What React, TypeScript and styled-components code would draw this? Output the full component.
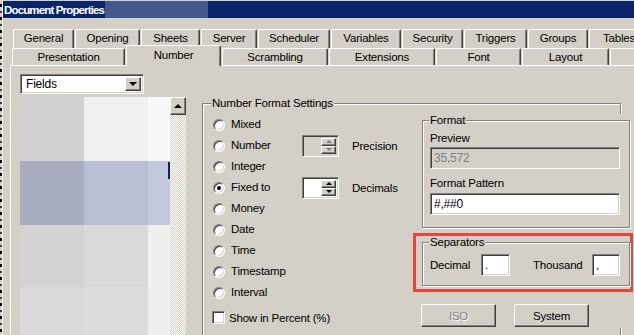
import styled, { createGlobalStyle } from 'styled-components';

const GlobalStyle = createGlobalStyle`
  html, body {
    margin: 0;
    padding: 0;
    background: #d4d0c8;
  }
  body {
    font-family: 'Liberation Sans', Arial, sans-serif;
    font-size: 11.5px;
    letter-spacing: -0.2px;
    color: #000;
  }
  * {
    box-sizing: border-box;
  }
`;

const TOP_TABS = [
    { label: 'General', w: 61 },
    { label: 'Opening', w: 65 },
    { label: 'Sheets', w: 59 },
    { label: 'Server', w: 56 },
    { label: 'Scheduler', w: 72 },
    { label: 'Variables', w: 70 },
    { label: 'Security', w: 61 },
    { label: 'Triggers', w: 63 },
    { label: 'Groups', w: 60 },
    { label: 'Tables', w: 60 },
];

const BOTTOM_TABS = [
    { label: 'Presentation', w: 113 },
    { label: 'Number', w: 95, active: true },
    { label: 'Scrambling', w: 106 },
    { label: 'Extensions', w: 106 },
    { label: 'Font', w: 85 },
    { label: 'Layout', w: 87 },
    { label: '', w: 70 },
];

const LIST_ROWS = [
    { h: 64, colors: ['#d1d1d1', '#f0f0f1', '#f8f8f8', '#f8f8f8'] },
    { h: 64, colors: ['#a8aebf', '#bac0d3', '#c3c8da', '#c3c8da'], mark: true },
    { h: 62, colors: ['#d4d3d3', '#d9d9d9', '#efefef', '#efefef'] },
    { h: 60, colors: ['#d9d9d9', '#dcdcdc', '#efefef', '#efefef'] },
];

const FORMATS = ['Mixed', 'Number', 'Integer', 'Fixed to', 'Money', 'Date', 'Time', 'Timestamp', 'Interval'];

export default function App() {
    return (
        <Page>
            <GlobalStyle />
            <DashStrip />
            <Window>
                <TitleBar>
                    <TitleText>Document Properties</TitleText>
                    <TitleBlur />
                </TitleBar>

                <TabRowTop>
                    {TOP_TABS.map((t) => (
                        <Tab key={t.label} $w={t.w}>
                            {t.label}
                        </Tab>
                    ))}
                </TabRowTop>
                <TabRowBottom>
                    {BOTTOM_TABS.map((t, i) => (
                        <Tab key={i} $w={t.w} $active={t.active}>
                            {t.label}
                        </Tab>
                    ))}
                </TabRowBottom>

                <Panel>
                    <LeftColumn>
                        <Dropdown>
                            <DropdownText>Fields</DropdownText>
                            <ArrowButton>
                                <TriangleDown />
                            </ArrowButton>
                        </Dropdown>
                        <ListArea>
                            <ListBox>
                                {LIST_ROWS.map((r, i) => (
                                    <ListRow key={i} $h={r.h}>
                                        {r.colors.map((c, j) => (
                                            <ListCell key={j} $bg={c}>
                                                {r.mark && j === 3 && <RowMark />}
                                            </ListCell>
                                        ))}
                                    </ListRow>
                                ))}
                            </ListBox>
                            <ScrollBar>
                                <ScrollButton>
                                    <TriangleUp />
                                </ScrollButton>
                            </ScrollBar>
                        </ListArea>
                    </LeftColumn>

                    <SettingsGroup>
                        <Legend>Number Format Settings</Legend>
                        <SettingsBody>
                            <Options>
                                {FORMATS.map((f, i) => (
                                    <RadioItem key={f} $row={i + 1}>
                                        <RadioDot $checked={f === 'Fixed to'} />
                                        {f}
                                    </RadioItem>
                                ))}
                                <SpinnerCell $row={2}>
                                    <Spinner $disabled>
                                        <SpinnerField />
                                        <SpinnerButtons>
                                            <SpinButton>
                                                <SmallUp $disabled />
                                            </SpinButton>
                                            <SpinButton>
                                                <SmallDown $disabled />
                                            </SpinButton>
                                        </SpinnerButtons>
                                    </Spinner>
                                </SpinnerCell>
                                <SpinnerLabel $row={2}>Precision</SpinnerLabel>
                                <SpinnerCell $row={4}>
                                    <Spinner>
                                        <SpinnerField />
                                        <SpinnerButtons>
                                            <SpinButton>
                                                <SmallUp />
                                            </SpinButton>
                                            <SpinButton>
                                                <SmallDown />
                                            </SpinButton>
                                        </SpinnerButtons>
                                    </Spinner>
                                </SpinnerCell>
                                <SpinnerLabel $row={4}>Decimals</SpinnerLabel>
                                <CheckItem>
                                    <CheckBox />
                                    Show in Percent (%)
                                </CheckItem>
                            </Options>

                            <RightColumn>
                                <FormatGroup>
                                    <Legend>Format</Legend>
                                    <FieldLabel>Preview</FieldLabel>
                                    <TextBox $disabled>35,572</TextBox>
                                    <FieldLabel $gap={8}>Format Pattern</FieldLabel>
                                    <TextBox>#,##0</TextBox>
                                </FormatGroup>

                                <Highlight>
                                    <SeparatorsGroup>
                                        <Legend>Separators</Legend>
                                        <SeparatorRow>
                                            <SepLabel $w={51}>Decimal</SepLabel>
                                            <SmallBox $w={29}>.</SmallBox>
                                            <SepLabel $w={59} $ml={23}>
                                                Thousand
                                            </SepLabel>
                                            <SmallBox $w={28}>,</SmallBox>
                                        </SeparatorRow>
                                    </SeparatorsGroup>
                                </Highlight>

                                <ButtonRow>
                                    <PushButton disabled>ISO</PushButton>
                                    <PushButton>System</PushButton>
                                </ButtonRow>
                            </RightColumn>
                        </SettingsBody>
                    </SettingsGroup>
                </Panel>
            </Window>
        </Page>
    );
}

const sunken = `
    border: 1px solid;
    border-color: #808080 #ffffff #ffffff #808080;
    box-shadow: inset 1px 1px 0 #404040, inset -1px -1px 0 #d4d0c8;
`;

const raised = `
    border: 1px solid;
    border-color: #ffffff #404040 #404040 #ffffff;
    box-shadow: inset -1px -1px 0 #808080;
    background: #d4d0c8;
`;

const Page = styled.div`
    display: flex;
    width: 634px;
    height: 335px;
    overflow: hidden;
`;

const DashStrip = styled.div`
    width: 2px;
    flex: none;
    background: repeating-linear-gradient(to bottom, #d4d0c8 0 4px, #000 4px 7px, #d4d0c8 7px 11px, #404040 11px 13px);
`;

const Window = styled.div`
    flex: 1;
    min-width: 0;
    display: flex;
    flex-direction: column;
    border-left: 1px solid #ffffff;
    background: #d4d0c8;
`;

const TitleBar = styled.div`
    display: flex;
    align-items: stretch;
    height: 17px;
    margin-top: 1px;
    padding-left: 1px;
    background: #0a246a;
`;

const TitleText = styled.span`
    display: flex;
    align-items: center;
    color: #ffffff;
    font-weight: bold;
    font-size: 11.5px;
    letter-spacing: -0.85px;
    padding-right: 1px;
`;

const TitleBlur = styled.span`
    width: 103px;
    background: #41598f;
`;

const TabRowTop = styled.div`
    display: flex;
    gap: 1px;
    height: 19px;
    margin-top: 11px;
    padding-left: 10px;
`;

const TabRowBottom = styled.div`
    display: flex;
    align-items: flex-end;
    gap: 1px;
    height: 17px;
    padding-left: 9px;
`;

const Tab = styled.div<{ $w: number; $active?: boolean }>`
    position: relative;
    flex: none;
    width: ${(p) => p.$w}px;
    height: ${(p) => (p.$active ? '21px' : '100%')};
    margin-bottom: ${(p) => (p.$active ? -1 : 0)}px;
    z-index: ${(p) => (p.$active ? 2 : 1)};
    padding-top: ${(p) => (p.$active ? 3 : 2)}px;
    line-height: 13px;
    text-align: center;
    background: #d4d0c8;
    border-top: 1px solid #ffffff;
    border-left: 1px solid #ffffff;
    border-right: 1px solid #404040;
    border-radius: 2px 2px 0 0;
    box-shadow: inset -1px 0 0 #808080;
    white-space: nowrap;
`;

const Panel = styled.div`
    flex: 1;
    display: flex;
    align-items: flex-start;
    margin-left: 7px;
    padding: 8px 0 0 9px;
    border-top: 1px solid #ffffff;
    border-left: 1px solid #ffffff;
    min-height: 0;
`;

const LeftColumn = styled.div`
    display: flex;
    flex-direction: column;
    gap: 3px;
    width: 166px;
    height: 270px;
    flex: none;
`;

const Dropdown = styled.div`
    display: flex;
    align-items: stretch;
    width: 124px;
    height: 23px;
    background: #ffffff;
    padding: 2px;
    ${sunken}
`;

const DropdownText = styled.span`
    flex: 1;
    display: flex;
    align-items: center;
    padding-left: 3px;
    font-size: 12px;
`;

const ArrowButton = styled.span`
    width: 16px;
    display: grid;
    place-items: center;
    ${raised}
`;

const TriangleDown = styled.span`
    width: 0;
    height: 0;
    border-left: 4px solid transparent;
    border-right: 4px solid transparent;
    border-top: 4px solid #000;
`;

const TriangleUp = styled.span`
    width: 0;
    height: 0;
    border-left: 4px solid transparent;
    border-right: 4px solid transparent;
    border-bottom: 4px solid #000;
`;

const ListArea = styled.div`
    flex: 1;
    display: flex;
`;

const ListBox = styled.div`
    width: 150px;
    display: flex;
    flex-direction: column;
`;

const ListRow = styled.div<{ $h: number }>`
    display: grid;
    grid-template-columns: 64px 64px 20px 2px;
    height: ${(p) => p.$h}px;
    flex: none;
`;

const ListCell = styled.div<{ $bg: string }>`
    background: ${(p) => p.$bg};
    position: relative;
`;

const RowMark = styled.span`
    position: absolute;
    top: 1px;
    left: 0;
    width: 2px;
    height: 17px;
    background: #0a246a;
`;

const ScrollBar = styled.div`
    width: 16px;
    background: repeating-conic-gradient(#ffffff 0 25%, #d4d0c8 0 50%) 0 0 / 2px 2px;
`;

const ScrollButton = styled.div`
    height: 18px;
    display: grid;
    place-items: center;
    ${raised}
`;

const SettingsGroup = styled.fieldset`
    flex: none;
    width: 419px;
    height: 270px;
    margin: 23px 0 0 16px;
    padding: 4px 0 0 9px;
    min-width: 0;
    border: 1px solid #808080;
    box-shadow: inset 1px 1px 0 #ffffff, 1px 1px 0 #ffffff;
`;

const Legend = styled.legend`
    padding: 0 1px;
    margin-left: -1px;
    line-height: 13px;
    background: #d4d0c8;
`;

const SettingsBody = styled.div`
    display: flex;
    align-items: flex-start;
`;

const Options = styled.div`
    display: grid;
    grid-template-columns: 90px 50px 70px;
    grid-template-rows: repeat(9, 21px) 25px;
    width: 210px;
    flex: none;
`;

const RadioItem = styled.label<{ $row: number }>`
    grid-column: 1;
    grid-row: ${(p) => p.$row};
    display: flex;
    align-items: center;
    gap: 6px;
    padding-left: 1px;
    line-height: 13px;
    white-space: nowrap;
`;

const RadioDot = styled.span<{ $checked?: boolean }>`
    flex: none;
    width: 12px;
    height: 12px;
    border-radius: 50%;
    background: #ffffff;
    display: grid;
    place-items: center;
    ${sunken}

    &::after {
        content: '';
        width: 4px;
        height: 4px;
        border-radius: 50%;
        background: ${(p) => (p.$checked ? '#000' : 'transparent')};
    }
`;

const SpinnerCell = styled.div<{ $row: number }>`
    grid-column: 2;
    grid-row: ${(p) => p.$row};
    display: flex;
    align-items: center;
`;

const Spinner = styled.div<{ $disabled?: boolean }>`
    display: flex;
    width: 37px;
    height: 22px;
    padding: 2px;
    background: ${(p) => (p.$disabled ? '#d4d0c8' : '#ffffff')};
    ${sunken}
`;

const SpinnerField = styled.span`
    flex: 1;
`;

const SpinnerButtons = styled.span`
    display: flex;
    flex-direction: column;
    width: 15px;
`;

const SpinButton = styled.span`
    flex: 1;
    display: grid;
    place-items: center;
    ${raised}
`;

const SmallUp = styled.span<{ $disabled?: boolean }>`
    width: 0;
    height: 0;
    border-left: 3px solid transparent;
    border-right: 3px solid transparent;
    border-bottom: 3px solid ${(p) => (p.$disabled ? '#808080' : '#000')};
`;

const SmallDown = styled.span<{ $disabled?: boolean }>`
    width: 0;
    height: 0;
    border-left: 3px solid transparent;
    border-right: 3px solid transparent;
    border-top: 3px solid ${(p) => (p.$disabled ? '#808080' : '#000')};
`;

const SpinnerLabel = styled.span<{ $row: number }>`
    grid-column: 3;
    grid-row: ${(p) => p.$row};
    display: flex;
    align-items: center;
`;

const CheckItem = styled.label`
    grid-column: 1 / 4;
    grid-row: 10;
    display: flex;
    align-items: center;
    gap: 4px;
    padding-top: 4px;
    white-space: nowrap;
`;

const CheckBox = styled.span`
    width: 13px;
    height: 13px;
    background: #ffffff;
    ${sunken}
`;

const RightColumn = styled.div`
    display: flex;
    flex-direction: column;
    width: 208px;
    margin-right: -10px;
    padding-bottom: 1px;
    background: #d4d0c8;
    position: relative;
`;

const etched = `
    border: 1px solid #808080;
    box-shadow: inset 1px 1px 0 #ffffff, 1px 1px 0 #ffffff;
    min-width: 0;
    margin: 0;
`;

const FormatGroup = styled.fieldset`
    ${etched}
    display: flex;
    flex-direction: column;
    width: 208px;
    padding: 0 9px 12px 7px;
`;

const FieldLabel = styled.span<{ $gap?: number }>`
    margin-top: ${(p) => p.$gap ?? 5}px;
    margin-bottom: ${(p) => (p.$gap ? 3 : 2)}px;
    line-height: 13px;
`;

const TextBox = styled.div<{ $disabled?: boolean }>`
    height: 22px;
    padding: 0 3px;
    display: flex;
    align-items: center;
    font-size: 12px;
    background: ${(p) => (p.$disabled ? '#d4d0c8' : '#ffffff')};
    color: ${(p) => (p.$disabled ? '#808080' : '#000')};
    ${sunken}
`;

const Highlight = styled.div`
    margin: 5px -3px 0 -9px;
    padding: 0 0 3px 6px;
    border: 3px solid #e8453c;
`;

const SeparatorsGroup = styled.fieldset`
    ${etched}
    width: 208px;
    padding: 5px 0 9px 7px;
`;

const SeparatorRow = styled.div`
    display: flex;
    align-items: center;
`;

const SepLabel = styled.span<{ $w: number; $ml?: number }>`
    width: ${(p) => p.$w}px;
    margin-left: ${(p) => p.$ml ?? 0}px;
`;

const SmallBox = styled.div<{ $w: number }>`
    width: ${(p) => p.$w}px;
    height: 22px;
    padding: 0 3px;
    display: flex;
    align-items: center;
    background: #ffffff;
    ${sunken}
`;

const ButtonRow = styled.div`
    display: flex;
    gap: 18px;
    margin: 12px 0 0 -1px;
`;

const PushButton = styled.button`
    width: 75px;
    height: 23px;
    padding: 0;
    font-family: inherit;
    font-size: 11.5px;
    letter-spacing: -0.2px;
    color: #000;
    ${raised}

    &:disabled {
        color: #808080;
        text-shadow: 1px 1px 0 #ffffff;
    }
`;
